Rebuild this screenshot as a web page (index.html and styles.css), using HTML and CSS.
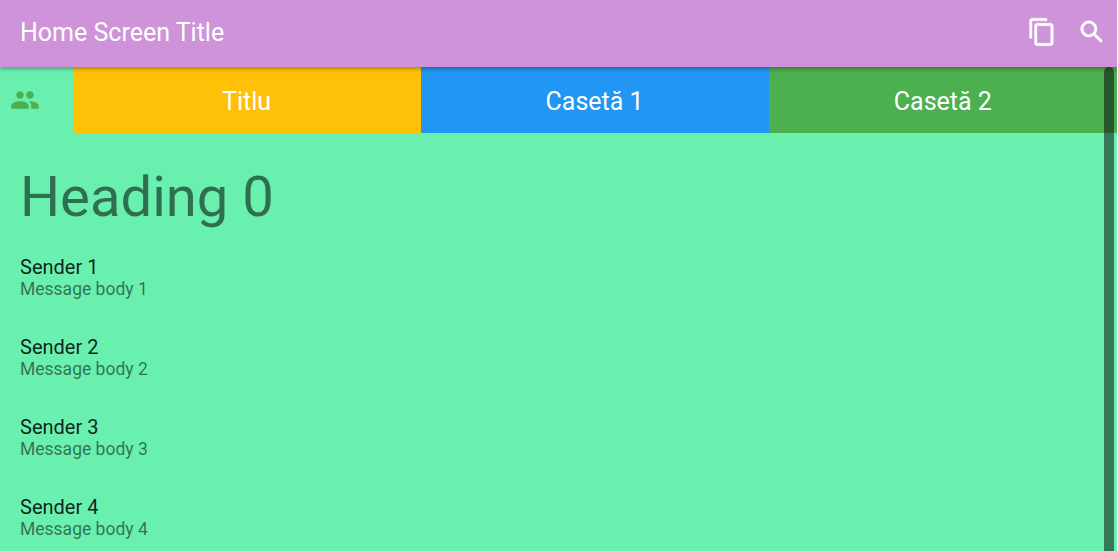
FILE: index.html
```html
<!DOCTYPE html>
<html lang="en">
<head>
    <meta charset="UTF-8">
    <meta name="viewport" content="width=device-width, initial-scale=1.0">
    <title>Home Screen Title</title>
    <link rel="stylesheet" href="styles.css">
</head>
<body>
    <div class="page">
        <header class="app-bar">
            <div class="app-title">Home Screen Title</div>
            <svg class="bar-icon copy-icon" viewBox="0 0 24 24" width="30" height="30"><path d="M16 1H4c-1.100 0-2 .9-2 2v14h2V3h12V1zm3 4H8c-1.100 0-2 .9-2 2v14c0 1.100.9 2 2 2h11c1.100 0 2-.9 2-2V7c0-1.100-.9-2-2-2zm0 16H8V7h11v14z"/></svg>
            <svg class="bar-icon search-icon" viewBox="0 0 24 24" width="30" height="30"><path d="M15.500 14h-.79l-.28-.27C15.410 12.590 16 11.110 16 9.500 16 5.910 13.090 3 9.500 3S3 5.910 3 9.500 5.910 16 9.500 16c1.610 0 3.090-.59 4.230-1.570l.27.28v.79l5 4.990L20.490 19l-4.990-5zm-6 0C7.010 14 5 11.990 5 9.500S7.010 5 9.500 5 14 7.010 14 9.500 11.990 14 9.500 14z"/></svg>
        </header>

        <nav class="tab-bar">
            <div class="tab tab-icon">
                <svg viewBox="0 0 24 24" width="30" height="30"><path d="M16 11c1.660 0 2.990-1.340 2.990-3S17.660 5 16 5c-1.660 0-3 1.340-3 3s1.340 3 3 3zm-8 0c1.660 0 2.990-1.340 2.990-3S9.660 5 8 5C6.340 5 5 6.340 5 8s1.340 3 3 3zm0 2c-2.330 0-7 1.170-7 3.500V19h14v-2.500c0-2.330-4.670-3.500-7-3.500zm8 0c-.29 0-.62.020-.97.050 1.160.84 1.970 1.970 1.970 3.450V19h6v-2.500c0-2.330-4.670-3.500-7-3.500z"/></svg>
            </div>
            <div class="tab tab-amber">Titlu</div>
            <div class="tab tab-blue">Casetă 1</div>
            <div class="tab tab-green">Casetă 2</div>
        </nav>

        <main class="content">
            <h1 class="heading">Heading 0</h1>
            <div class="message">
                <div class="sender">Sender 1</div>
                <div class="body-text">Message body 1</div>
            </div>
            <div class="message">
                <div class="sender">Sender 2</div>
                <div class="body-text">Message body 2</div>
            </div>
            <div class="message">
                <div class="sender">Sender 3</div>
                <div class="body-text">Message body 3</div>
            </div>
            <div class="message">
                <div class="sender">Sender 4</div>
                <div class="body-text">Message body 4</div>
            </div>
        </main>

        <div class="scroll-thumb"></div>
    </div>
</body>
</html>
```

FILE: styles.css
```css
html, body {
    margin: 0;
    padding: 0;
    height: 100%;
    overflow: hidden;
}

body {
    font-family: Roboto, sans-serif;
    background-color: #fff;
}

.page {
    position: relative;
    width: 1117px;
    height: 551px;
    overflow: hidden;
    background-color: #69f0ae;
}

.app-bar {
    position: relative;
    z-index: 2;
    display: flex;
    align-items: center;
    box-sizing: border-box;
    height: 67px;
    padding: 0 0 3px 20px;
    background-color: #ce93d8;
    box-shadow: 0 2px 4px rgba(0, 0, 0, 0.3);
    color: #fff;
}

.app-title {
    flex: 1;
    font-size: 25px;
    font-weight: 400;
}

.bar-icon {
    fill: #fff;
    stroke: #fff;
    stroke-width: 0.35;
}

.copy-icon {
    margin-right: 20.5px;
}

.search-icon {
    margin-right: 10px;
}

.tab-bar {
    display: flex;
    height: 66px;
}

.tab {
    flex: 0 0 348px;
    display: flex;
    align-items: center;
    justify-content: center;
    box-sizing: border-box;
    padding-top: 2px;
    font-size: 25px;
    color: #fff;
}

.tab-icon {
    flex: 0 0 72.6px;
    padding: 0 22.6px 0 0;
    fill: #4caf50;
}

.tab-amber {
    background-color: #ffc107;
}

.tab-blue {
    background-color: #2196f3;
}

.tab-green {
    flex: 1;
    background-color: #4caf50;
}

.content {
    padding: 0 20px;
}

.heading {
    margin: 27px 0 21px;
    font-size: 56.2px;
    font-weight: 400;
    line-height: 74px;
    color: rgba(0, 0, 0, 0.54);
}

.message {
    height: 80px;
}

.sender {
    font-size: 20px;
    line-height: 24px;
    color: rgba(0, 0, 0, 0.87);
}

.body-text {
    font-size: 17.5px;
    line-height: 20px;
    color: rgba(0, 0, 0, 0.54);
}

.scroll-thumb {
    position: absolute;
    top: 67px;
    right: 3px;
    bottom: 0;
    width: 10px;
    border-radius: 5px 5px 0 0;
    background-color: rgba(0, 0, 0, 0.5);
}
```
